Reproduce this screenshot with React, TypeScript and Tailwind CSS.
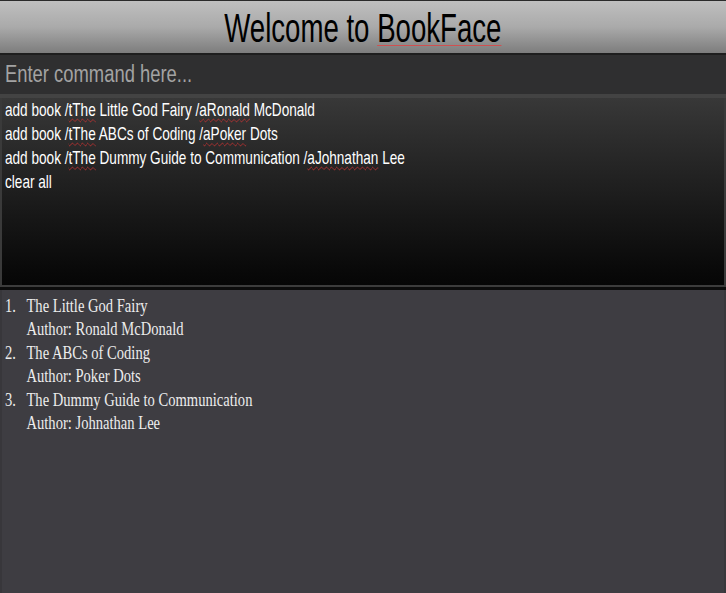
import React from "react";

const commands = [
  { pre: "add book /", t: "tThe", mid: " Little God Fairy /", a: "aRonald", post: " McDonald" },
  { pre: "add book /", t: "tThe", mid: " ABCs of Coding /", a: "aPoker", post: " Dots" },
  { pre: "add book /", t: "tThe", mid: " Dummy Guide to Communication /", a: "aJohnathan", post: " Lee" },
];

const books = [
  { title: "The Little God Fairy", author: "Ronald McDonald" },
  { title: "The ABCs of Coding", author: "Poker Dots" },
  { title: "The Dummy Guide to Communication", author: "Johnathan Lee" },
];

function Squiggle({ children }: { children: React.ReactNode }) {
  return (
    <span className="underline decoration-wavy decoration-[#b03030] decoration-1 underline-offset-2">
      {children}
    </span>
  );
}

export default function App() {
  return (
    <div className="w-[726px] h-[593px] flex flex-col bg-[#3e3d42] overflow-hidden">
      <div className="h-[1px] bg-[#2a2a2a]" />
      <header className="h-[54px] flex items-center justify-center bg-gradient-to-b from-[#bfbfbf] via-[#aaaaaa] to-[#7d7d7d] border-b-2 border-[#1e1e1e]">
        <span className="inline-block origin-center scale-x-[0.69] text-[40px] leading-none text-black [font-family:'Liberation_Sans',Arial,sans-serif] mt-[2px] whitespace-nowrap">
          Welcome to{" "}
          <span className="underline decoration-[#d05050] decoration-1 underline-offset-[3px]">BookFace</span>
        </span>
      </header>
      <div className="h-[39px] bg-[#2f2f30] flex items-center px-[5px]">
        <span className="inline-block origin-left scale-x-[0.8] text-[23px] text-[#a3a3a3] [font-family:'Liberation_Sans',Arial,sans-serif] whitespace-nowrap">
          Enter command here...
        </span>
      </div>
      <div className="h-[4px] bg-[#434343]" />
      <div className="h-[187px] border-l-2 border-r-2 border-[#3a3a3a] bg-gradient-to-b from-[#383838] via-[#1e1e1e] to-[#060606] px-[3px]">
        <div className="origin-left scale-x-[0.735] w-[136%] text-[18.5px] leading-[24px] text-white [font-family:'Liberation_Sans',Arial,sans-serif] whitespace-nowrap">
          {commands.map((c, i) => (
            <div key={i}>
              {c.pre}
              <Squiggle>{c.t}</Squiggle>
              {c.mid}
              <Squiggle>{c.a}</Squiggle>
              {c.post}
            </div>
          ))}
          <div>clear all</div>
        </div>
      </div>
      <div className="h-[2px] bg-[#3c3c3c]" />
      <div className="h-[3px] bg-[#0c0c0c]" />
      <div className="flex-1 bg-[#3e3d42] border-l-2 border-r-2 border-[#38373b] pt-[5px] pl-[3px]">
        <div className="origin-left scale-x-[0.81] w-[124%] text-[18px] leading-[23.4px] text-[#ececec] [font-family:'Liberation_Serif','Times_New_Roman',serif]">
          {books.map((b, i) => (
            <div key={i} className="flex">
              <span className="w-[26.5px] shrink-0">{i + 1}.</span>
              <div>
                <div>{b.title}</div>
                <div>Author: {b.author}</div>
              </div>
            </div>
          ))}
        </div>
      </div>
    </div>
  );
}
